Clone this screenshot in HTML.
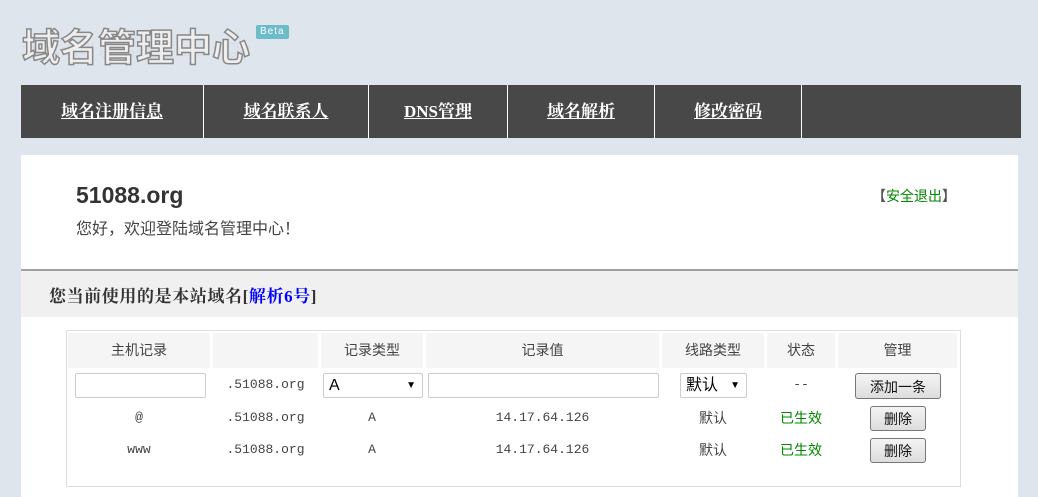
<!DOCTYPE html>
<html><head><meta charset="utf-8"><style>
*{margin:0;padding:0;box-sizing:border-box}
body{width:1038px;height:497px;background:#dfe5ec;font-family:"Liberation Sans","Noto Sans CJK SC",sans-serif;position:relative;overflow:hidden}
.abs{position:absolute}
.logo{left:22px;top:24px;font-size:38px;font-weight:bold;color:#eee;letter-spacing:0px;-webkit-text-stroke:1.5px #888;font-family:"WenQuanYi Zen Hei","Noto Sans CJK SC",sans-serif;line-height:42px}
.refl{left:22px;top:60px;font-size:38px;font-weight:bold;color:#e4e8ec;-webkit-text-stroke:1px #ccd;transform:scaleY(-0.4);transform-origin:top;opacity:.6;font-family:"WenQuanYi Zen Hei","Noto Sans CJK SC",sans-serif;line-height:42px}
.beta{left:256px;top:25px;background:#6bbcc8;color:#fff;font-size:10px;padding:0 4px;height:14px;line-height:14px;border-radius:2px;letter-spacing:1px}
.nav{left:21px;top:85px;width:1000px;height:53px;background:#484848}
.nav div{position:absolute;top:0;height:53px;line-height:53px;text-align:center;color:#fff;font-weight:bold;font-size:17px;text-decoration:underline;border-right:1px solid #fff;font-family:"Liberation Serif","Noto Serif CJK SC",serif}
.box{left:21px;top:155px;width:997px;height:342px;background:#fff}
.gray{left:21px;top:269px;width:997px;height:48px;background:#f0f0f0;border-top:2px solid #a0a0a0}
.tbl{left:66px;top:330px;width:895px;height:157px;border:1px solid #ddd}
.th{position:absolute;top:333px;height:35px;background:#f5f5f5;text-align:center;line-height:35px;font-size:14px;color:#444}
.td{position:absolute;text-align:center;font-size:13px;color:#444;font-family:"Liberation Mono","Noto Sans CJK SC",monospace}
.inp{position:absolute;border:1px solid #ccc;border-radius:2px;background:#fff;height:25px}
.btn{position:absolute;border:1px solid #777;border-radius:3px;background:linear-gradient(#f4f4f4,#ddd);font-size:14px;text-align:center;color:#111}
.g{color:#080}
</style></head><body>
<div class="abs refl">域名管理中心</div>
<div class="abs logo">域名管理中心</div>
<div class="abs beta">Beta</div>
<div class="abs nav">
<div style="left:0;width:183px">域名注册信息</div>
<div style="left:183px;width:165px">域名联系人</div>
<div style="left:348px;width:139px">DNS管理</div>
<div style="left:487px;width:147px">域名解析</div>
<div style="left:634px;width:147px">修改密码</div>
</div>
<div class="abs box"></div>
<div class="abs" style="left:76px;top:182px;font-size:23px;font-weight:bold;color:#333">51088.org</div>
<div class="abs" style="left:76px;top:215px;font-size:16px;color:#444">您好，欢迎登陆域名管理中心！</div>
<div class="abs" style="left:872px;top:186px;font-size:14px;color:#080"><span style="color:#555;font-weight:bold">【</span>安全退出<span style="color:#555;font-weight:bold">】</span></div>
<div class="abs gray"></div>
<div class="abs" style="left:49px;top:282px;font-size:17px;font-weight:bold;color:#333;font-family:'Liberation Serif','Noto Serif CJK SC',serif;letter-spacing:0.6px">您当前使用的是本站域名[<span style="color:#00f">解析6号</span>]</div>
<div class="abs tbl"></div>
<div class="th" style="left:68px;width:142px">主机记录</div>
<div class="th" style="left:213px;width:105px"></div>
<div class="th" style="left:321px;width:102px">记录类型</div>
<div class="th" style="left:426px;width:233px">记录值</div>
<div class="th" style="left:662px;width:102px">线路类型</div>
<div class="th" style="left:767px;width:68px">状态</div>
<div class="th" style="left:838px;width:119px">管理</div>
<div class="inp" style="left:75px;top:373px;width:131px"></div>
<div class="td" style="left:213px;width:105px;top:377px">.51088.org</div>
<div class="inp" style="left:323px;top:373px;width:100px;font-size:16px;padding-left:5px;line-height:23px;color:#000">A<span style="position:absolute;right:6px;top:0;font-size:10px">▼</span></div>
<div class="inp" style="left:428px;top:373px;width:231px"></div>
<div class="inp" style="left:680px;top:373px;width:67px;font-size:16px;padding-left:5px;line-height:23px;color:#000">默认<span style="position:absolute;right:6px;top:0;font-size:10px">▼</span></div>
<div class="td" style="left:767px;width:68px;top:377px">--</div>
<div class="btn" style="left:855px;top:373px;width:86px;height:26px;line-height:26px">添加一条</div>
<div class="td" style="left:68px;width:142px;top:410px">@</div>
<div class="td" style="left:213px;width:105px;top:410px">.51088.org</div>
<div class="td" style="left:321px;width:102px;top:410px">A</div>
<div class="td" style="left:426px;width:233px;top:410px">14.17.64.126</div>
<div class="td" style="left:662px;width:102px;top:408px;font-size:14px">默认</div>
<div class="td g" style="left:767px;width:68px;top:408px;font-size:14px">已生效</div>
<div class="btn" style="left:870px;top:406px;width:56px;height:25px;line-height:25px">删除</div>
<div class="td" style="left:68px;width:142px;top:442px">www</div>
<div class="td" style="left:213px;width:105px;top:442px">.51088.org</div>
<div class="td" style="left:321px;width:102px;top:442px">A</div>
<div class="td" style="left:426px;width:233px;top:442px">14.17.64.126</div>
<div class="td" style="left:662px;width:102px;top:440px;font-size:14px">默认</div>
<div class="td g" style="left:767px;width:68px;top:440px;font-size:14px">已生效</div>
<div class="btn" style="left:870px;top:438px;width:56px;height:25px;line-height:25px">删除</div>
</body></html>
